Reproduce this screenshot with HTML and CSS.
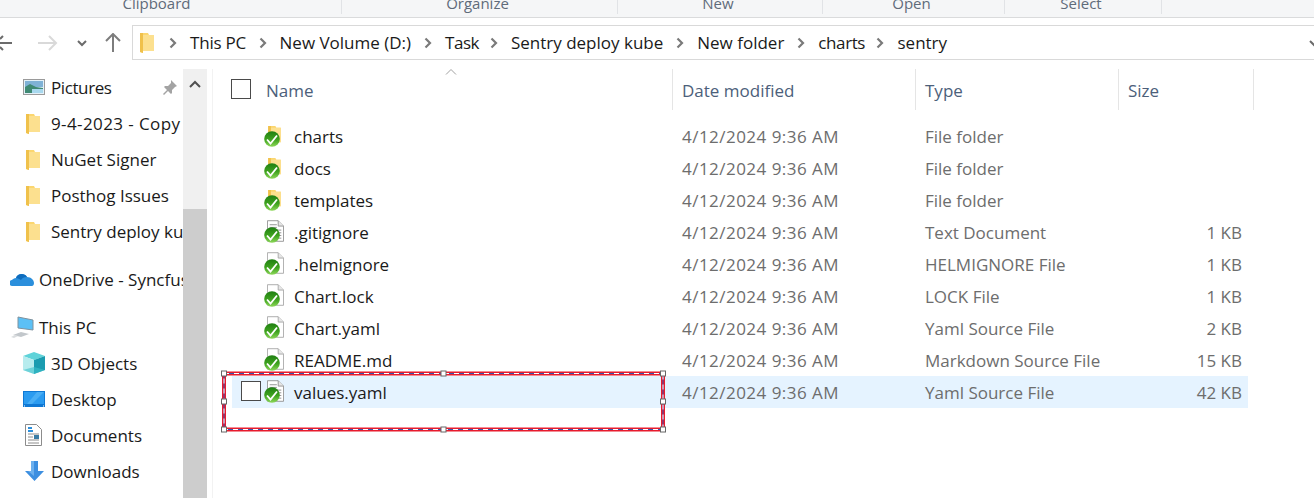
FILE: index.html
```html
<!DOCTYPE html>
<html lang="en">
<head>
<meta charset="utf-8">
<title>sentry - File Explorer</title>
<link rel="stylesheet" href="styles.css">
</head>
<body>
<svg class="defs" width="0" height="0" aria-hidden="true">
  <defs>
    <linearGradient id="okfill" x1="0" y1="0" x2="0" y2="1">
      <stop offset="0" stop-color="#1f7f12"/>
      <stop offset=".55" stop-color="#3fa31f"/>
      <stop offset="1" stop-color="#8ed85a"/>
    </linearGradient>
    <symbol id="folder" viewBox="0 0 14 21">
      <path d="M0 1h8l1 2h5v16H3v2l-3-1z" fill="#fbd66f"/>
      <path d="M3 3h11v16H3z" fill="#fce08f"/>
      <path d="M0 1h3v20l-3-1z" fill="#f0c14b"/>
    </symbol>
    <symbol id="doc" viewBox="0 0 19 24">
      <path d="M.5.5h12l6 6v17H.5z" fill="#fff" stroke="#a6a6a6"/>
      <path d="M12.500.5v6h6" fill="#e6e6e6" stroke="#a6a6a6"/>
    </symbol>
    <symbol id="lines" viewBox="0 0 19 24">
      <path d="M.5.5h12l6 6v17H.5z" fill="#fff" stroke="#8f8f8f"/>
      <path d="M12.500.5v6h6" fill="#e6e6e6" stroke="#8f8f8f"/>
      <path d="M3 5h8M3 8h8M3 11h13M3 14h13M3 17h13M3 20h13" stroke="#8a8a8a"/>
    </symbol>
    <symbol id="ok" viewBox="0 0 16 16">
      <circle cx="8" cy="8" r="7.800" fill="url(#okfill)"/>
      <path d="M3 8.500l3.500 4L13 4.500" fill="none" stroke="#fff" stroke-width="1.800"/>
    </symbol>
    <symbol id="sep" viewBox="0 0 8 12">
      <path d="M1.500 1.500L6 6l-4.500 4.500" fill="none" stroke="#7a7a7a" stroke-width="2.200"/>
    </symbol>
  </defs>
</svg>

<div class="ribbon">
  <div class="group g1">Clipboard</div>
  <div class="group g2">Organize</div>
  <div class="group g3">New</div>
  <div class="group g4">Open</div>
  <div class="group g5">Select</div>
</div>

<div class="navbar">
  <svg class="nav-back" width="12" height="16" viewBox="0 0 12 16"><path d="M0 8h12M3 1L0 4M3 15l-3-3" fill="none" stroke="#6b6b6b" stroke-width="2"/></svg>
  <svg class="nav-forward" width="20" height="16" viewBox="0 0 20 16"><path d="M0 8h18M11 1l7 7-7 7" fill="none" stroke="#d9d9d9" stroke-width="2"/></svg>
  <svg class="nav-down" width="10" height="7" viewBox="0 0 10 7"><path d="M1 1l4 4 4-4" fill="none" stroke="#6b6b6b" stroke-width="2"/></svg>
  <svg class="nav-up" width="16" height="19" viewBox="0 0 16 19"><path d="M8 19V1M1 8l7-7 7 7" fill="none" stroke="#7d7d7d" stroke-width="2"/></svg>
  <div class="address">
    <svg class="addr-folder"><use href="#folder"/></svg>
    <svg class="crumb-sep"><use href="#sep"/></svg><span class="crumb-pc">This PC</span>
    <svg class="crumb-sep"><use href="#sep"/></svg><span>New Volume (D:)</span>
    <svg class="crumb-sep"><use href="#sep"/></svg><span class="crumb-task">Task</span>
    <svg class="crumb-sep"><use href="#sep"/></svg><span>Sentry deploy kube</span>
    <svg class="crumb-sep"><use href="#sep"/></svg><span>New folder</span>
    <svg class="crumb-sep"><use href="#sep"/></svg><span class="crumb-charts">charts</span>
    <svg class="crumb-sep"><use href="#sep"/></svg><span>sentry</span>
  </div>
  <svg class="addr-drop" width="10" height="7" viewBox="0 0 10 7"><path d="M1 1l4 4 4-4" fill="none" stroke="#6b6b6b" stroke-width="2"/></svg>
</div>

<div class="main">
  <nav class="sidebar">
    <div class="side-item">
      <svg class="side-icon" width="22" height="16" viewBox="0 0 22 16"><rect x=".5" y=".5" width="21" height="15" fill="#e4f1f8" stroke="#9a9a9a"/><path d="M2 2h18v6H2z" fill="#7fb2d6"/><path d="M2 8l5-3 6 3 7 1v5H2z" fill="#3f8a74"/><path d="M9 10h11v4H9z" fill="#a8d8ee"/></svg>
      <span class="side-label side-pictures">Pictures</span>
      <svg class="pin" width="16" height="16" viewBox="0 0 16 16"><path d="M9 1l6 6-2 1-3 3v3l-1 1-3-3-4 4-1-1 4-4-3-3 1-1h3l3-3z" fill="#a3a3a3"/></svg>
    </div>
    <div class="side-item"><svg class="side-folder"><use href="#folder"/></svg><span class="side-label side-date">9-4-2023 - Copy</span></div>
    <div class="side-item"><svg class="side-folder"><use href="#folder"/></svg><span class="side-label">NuGet Signer</span></div>
    <div class="side-item"><svg class="side-folder"><use href="#folder"/></svg><span class="side-label">Posthog Issues</span></div>
    <div class="side-item"><svg class="side-folder"><use href="#folder"/></svg><span class="side-label">Sentry deploy kube</span></div>
    <div class="side-item top side-gap">
      <svg class="top-icon" width="25" height="16" viewBox="0 0 25 16"><path d="M3 15a3 3 0 0 1-1-6c1-1 2-2 4-2 1-4 8-6 11-1 4 0 7 3 7 6 0 2-1 3-2 3z" fill="#2b8fdc"/><path d="M6 7c1-4 8-6 11-1-3 0-5 1-6 3-2-1-3-2-5-2z" fill="#0f6cbd"/></svg>
      <span class="side-label">OneDrive - Syncfusion</span>
    </div>
    <div class="side-item top side-gap">
      <svg class="top-icon" width="25" height="22" viewBox="0 0 25 22"><path d="M8 1l15 3v10L8 12z" fill="#5cc0f5" stroke="#7f929e"/><path d="M3 19l8-3 8 2-8 3z" fill="#c2c7cb"/><path d="M1 21l4-2 3 1-4 2z" fill="#dadddf"/></svg>
      <span class="side-label">This PC</span>
    </div>
    <div class="side-item">
      <svg class="side-icon" width="22" height="22" viewBox="0 0 22 22"><path d="M11 0l11 4-11 4L0 4z" fill="#5fd3d9"/><path d="M0 4l11 4v14L0 18z" fill="#b7ecee"/><path d="M22 4l-11 4v14l11-4z" fill="#1b9cb0"/><path d="M11 15l11 3-11 4-11-4z" fill="#3cc1cc" opacity=".6"/></svg>
      <span class="side-label">3D Objects</span>
    </div>
    <div class="side-item">
      <svg class="side-icon" width="22" height="16" viewBox="0 0 22 16"><rect width="22" height="16" fill="#0f78d4"/><path d="M1 1h20v12H1z" fill="#2b9bf0"/><path d="M4 13L14 1h7L9 13z" fill="#49aef5"/><path d="M1 15h20" stroke="#fff" stroke-dasharray="1 18" /></svg>
      <span class="side-label">Desktop</span>
    </div>
    <div class="side-item">
      <svg class="side-icon doc-icon" width="17" height="22" viewBox="0 0 17 22"><path d="M.5.5h11l5 5v16H.5z" fill="#fff" stroke="#8c8c8c"/><path d="M3 7h5M3 4h4" stroke="#2b8fdc" stroke-width="2"/><path d="M3 10h11M3 13h5M3 16h11M3 19h11" stroke="#8c8c8c"/><rect x="9" y="11" width="5" height="4" fill="#3a7ca5"/></svg>
      <span class="side-label">Documents</span>
    </div>
    <div class="side-item">
      <svg class="side-icon doc-icon" width="19" height="20" viewBox="0 0 19 20"><path d="M6 0h7v10h6l-9.500 10L0 10h6z" fill="#3d8fe0"/><path d="M6 0h3v15L3 10h3z" fill="#6cb0ee"/></svg>
      <span class="side-label">Downloads</span>
    </div>
  </nav>

  <div class="scrollbar">
    <div class="scroll-arrow"><svg width="12" height="8" viewBox="0 0 12 8"><path d="M1 7l5-5 5 5" fill="none" stroke="#505050" stroke-width="2"/></svg></div>
    <div class="scroll-thumb"></div>
  </div>

  <section class="list">
    <svg class="sort" width="12" height="6" viewBox="0 0 12 6"><path d="M1 5.500l5-5 5 5" fill="none" stroke="#a0a0a0"/></svg>
    <div class="head">
      <div class="col c-name"><span class="check"></span><span>Name</span></div>
      <div class="col c-date">Date modified</div>
      <div class="col c-type">Type</div>
      <div class="col c-size">Size</div>
    </div>
    <div class="rows">
      <div class="row"><div class="cell-name"><span class="ficon"><svg class="fi-folder"><use href="#folder"/></svg><svg class="fi-ok"><use href="#ok"/></svg></span>charts</div><div class="cell c-date">4/12/2024 9:36 AM</div><div class="cell c-type">File folder</div></div>
      <div class="row"><div class="cell-name"><span class="ficon"><svg class="fi-folder"><use href="#folder"/></svg><svg class="fi-ok"><use href="#ok"/></svg></span>docs</div><div class="cell c-date">4/12/2024 9:36 AM</div><div class="cell c-type">File folder</div></div>
      <div class="row"><div class="cell-name"><span class="ficon"><svg class="fi-folder"><use href="#folder"/></svg><svg class="fi-ok"><use href="#ok"/></svg></span>templates</div><div class="cell c-date">4/12/2024 9:36 AM</div><div class="cell c-type">File folder</div></div>
      <div class="row"><div class="cell-name"><span class="ficon"><svg class="fi-doc"><use href="#lines"/></svg><svg class="fi-ok"><use href="#ok"/></svg></span>.gitignore</div><div class="cell c-date">4/12/2024 9:36 AM</div><div class="cell c-type">Text Document</div><div class="cell c-size">1 KB</div></div>
      <div class="row"><div class="cell-name"><span class="ficon"><svg class="fi-doc"><use href="#doc"/></svg><svg class="fi-ok"><use href="#ok"/></svg></span>.helmignore</div><div class="cell c-date">4/12/2024 9:36 AM</div><div class="cell c-type">HELMIGNORE File</div><div class="cell c-size">1 KB</div></div>
      <div class="row"><div class="cell-name"><span class="ficon"><svg class="fi-doc"><use href="#doc"/></svg><svg class="fi-ok"><use href="#ok"/></svg></span>Chart.lock</div><div class="cell c-date">4/12/2024 9:36 AM</div><div class="cell c-type">LOCK File</div><div class="cell c-size">1 KB</div></div>
      <div class="row"><div class="cell-name"><span class="ficon"><svg class="fi-doc"><use href="#doc"/></svg><svg class="fi-ok"><use href="#ok"/></svg></span>Chart.yaml</div><div class="cell c-date">4/12/2024 9:36 AM</div><div class="cell c-type">Yaml Source File</div><div class="cell c-size">2 KB</div></div>
      <div class="row"><div class="cell-name"><span class="ficon"><svg class="fi-doc"><use href="#doc"/></svg><svg class="fi-ok"><use href="#ok"/></svg></span>README.md</div><div class="cell c-date">4/12/2024 9:36 AM</div><div class="cell c-type">Markdown Source File</div><div class="cell c-size">15 KB</div></div>
      <div class="row selected"><span class="check row-check"></span><div class="cell-name"><span class="ficon"><svg class="fi-doc"><use href="#lines"/></svg><svg class="fi-ok"><use href="#ok"/></svg></span>values.yaml</div><div class="cell c-date">4/12/2024 9:36 AM</div><div class="cell c-type">Yaml Source File</div><div class="cell c-size">42 KB</div></div>
    </div>
  </section>
</div>

<svg class="markup" width="448" height="66" viewBox="0 0 448 66" aria-hidden="true">
  <rect class="mk-red" x="4" y="4.500" width="439" height="56"/>
  <rect class="mk-blue" x="4" y="4.500" width="439" height="56"/>
  <rect class="mk-dash" x="4" y="4.500" width="439" height="56"/>
  <rect class="mk-handle" x="1.500" y="2" width="5" height="5"/>
  <rect class="mk-handle" x="221" y="2" width="5" height="5"/>
  <rect class="mk-handle" x="440.500" y="2" width="5" height="5"/>
  <rect class="mk-handle" x="1.500" y="30" width="5" height="5"/>
  <rect class="mk-handle" x="440.500" y="30" width="5" height="5"/>
  <rect class="mk-handle" x="1.500" y="58" width="5" height="5"/>
  <rect class="mk-handle" x="221" y="58" width="5" height="5"/>
  <rect class="mk-handle" x="440.500" y="58" width="5" height="5"/>
</svg>
</body>
</html>
```
FILE: styles.css
```css
html, body {
  margin: 0;
  height: 100%;
  background: #fff;
  overflow: hidden;
}
body {
  position: relative;
  font-family: "Open Sans", "Noto Sans", "Liberation Sans", sans-serif;
  font-size: 17px;
  color: #1a1a1a;
}
.defs { position: absolute; }

/* ribbon */
.ribbon {
  display: flex;
  height: 17px;
  background: #f5f6f7;
  border-bottom: 1px solid #dadbdc;
  color: #5f6b7a;
  font-size: 15px;
  overflow: hidden;
}
.group {
  height: 14px;
  line-height: 6px;
  text-align: center;
  border-right: 1px solid #e1e3e6;
  box-sizing: content-box;
}
.g1 { width: 313px; padding-right: 28px; }
.g2 { width: 271px; padding-right: 4px; }
.g3 { width: 200px; padding-right: 4px; }
.g4 { width: 177px; padding-right: 4px; }
.g5 { width: 152px; padding-right: 4px; }

/* nav bar */
.navbar {
  position: relative;
  display: flex;
  align-items: center;
  height: 51px;
  padding-bottom: 2px;
  box-sizing: border-box;
}
.nav-back { margin-left: 0; flex: none; }
.nav-forward { margin-left: 26px; flex: none; }
.nav-down { margin-left: 19px; flex: none; margin-top: 1px; }
.nav-up { margin-left: 18px; flex: none; }
.address {
  flex: none;
  display: flex;
  align-items: center;
  gap: 12px;
  width: 1200px;
  height: 35px;
  margin-left: 11px;
  padding-left: 7px;
  box-sizing: border-box;
  border: 1px solid #d9d9d9;
  color: #1a1a1a;
  white-space: nowrap;
}
.addr-folder { width: 14px; height: 21px; flex: none; margin-right: 3px; }
.crumb-sep { width: 8px; height: 12px; flex: none; margin-right: 1px; }
.address span { margin-right: 1px; }
.address .crumb-pc { letter-spacing: -.2px; margin-right: .4px; }
.address .crumb-task { letter-spacing: -.5px; margin-right: -1px; }
.address .crumb-charts { letter-spacing: -.4px; margin-right: -.6px; }
.addr-drop { position: absolute; right: -5px; top: 22px; }

/* main */
.main {
  display: flex;
  height: 429px;
  overflow: hidden;
}
.sidebar {
  width: 183px;
  flex: none;
  overflow: hidden;
  box-sizing: border-box;
}
.side-item {
  position: relative;
  display: flex;
  align-items: center;
  height: 36px;
  padding-left: 51px;
  white-space: nowrap;
}
.side-gap { margin-top: 12px; }
.side-item.top { padding-left: 39px; }
.side-pictures { letter-spacing: -.4px; }
.side-date { letter-spacing: .4px; }
.side-icon { position: absolute; left: 23px; top: 50%; transform: translateY(-50%); }
.doc-icon { left: 25px; }
.side-folder { position: absolute; left: 26px; top: 8px; width: 14px; height: 21px; }
.top-icon { position: absolute; left: 10px; top: 50%; transform: translateY(-50%); }
.pin { position: absolute; left: 162px; top: 10px; }

.scrollbar {
  width: 24px;
  flex: none;
  background: #f0f0f0;
  display: flex;
  flex-direction: column;
}
.scroll-arrow { height: 36px; display: flex; justify-content: center; padding-top: 11px; box-sizing: border-box; }
.scroll-arrow svg { display: block; }
.scroll-thumb { margin-top: 104px; background: #cdcdcd; flex: 1; }

/* list */
.list {
  position: relative;
  flex: 1;
  margin-left: 5px;
  border-left: 1px solid #f2f2f2;
}
.sort { position: absolute; left: 232px; top: 0; }
.head {
  position: relative;
  display: flex;
  height: 51px;
  color: #4c607a;
  font-size: 17px;
}
.col {
  height: 41px;
  display: flex;
  align-items: center;
  box-sizing: border-box;
  border-right: 1px solid #e5e5e5;
  padding-top: 2px;
}
.head .c-name { width: 460px; padding-left: 18px; gap: 15px; }
.head .c-date { width: 243px; padding-left: 9px; }
.head .c-type { width: 203px; padding-left: 9px; }
.head .c-size { width: 135px; padding-left: 9px; }
.check {
  display: block;
  width: 20px;
  height: 20px;
  box-sizing: border-box;
  border: 1px solid #4a4a4a;
  background: #fff;
  margin-top: -4px;
  flex: none;
}
.rows { width: 1016px; margin-left: 19px; }
.row {
  position: relative;
  display: flex;
  align-items: center;
  height: 32px;
  color: #6d6d6d;
}
.row.selected { background: #e5f3ff; }
.row-check { position: absolute; left: 9px; top: 5px; margin: 0; }
.cell-name {
  display: flex;
  align-items: center;
  width: 450px;
  padding-left: 62px;
  box-sizing: border-box;
  color: #1a1a1a;
}
.ficon { position: absolute; left: 32px; top: 3px; width: 24px; height: 26px; }
.fi-folder { position: absolute; left: 4px; top: 2px; width: 13px; height: 19px; }
.fi-doc { position: absolute; left: 3px; top: 1px; width: 17px; height: 22px; }
.fi-ok { position: absolute; left: 0; top: 8px; width: 16px; height: 16px; }
.cell.c-date { width: 243px; letter-spacing: .47px; }
.cell.c-type { width: 203px; white-space: nowrap; }
.cell.c-size { width: 108px; text-align: right; margin-left: 6px; flex: none; }

/* screenshot annotation */
.markup {
  position: absolute;
  left: 220px;
  top: 369px;
}
.mk-red, .mk-blue, .mk-dash { fill: none; }
.mk-red { stroke: #e81b2d; stroke-width: 4; }
.mk-blue { stroke: #3a55b0; stroke-width: 1; }
.mk-dash { stroke: #fff; stroke-width: 1; stroke-dasharray: 5 5; }
.mk-handle { fill: #fff; stroke: #666; stroke-width: 1; }
```
